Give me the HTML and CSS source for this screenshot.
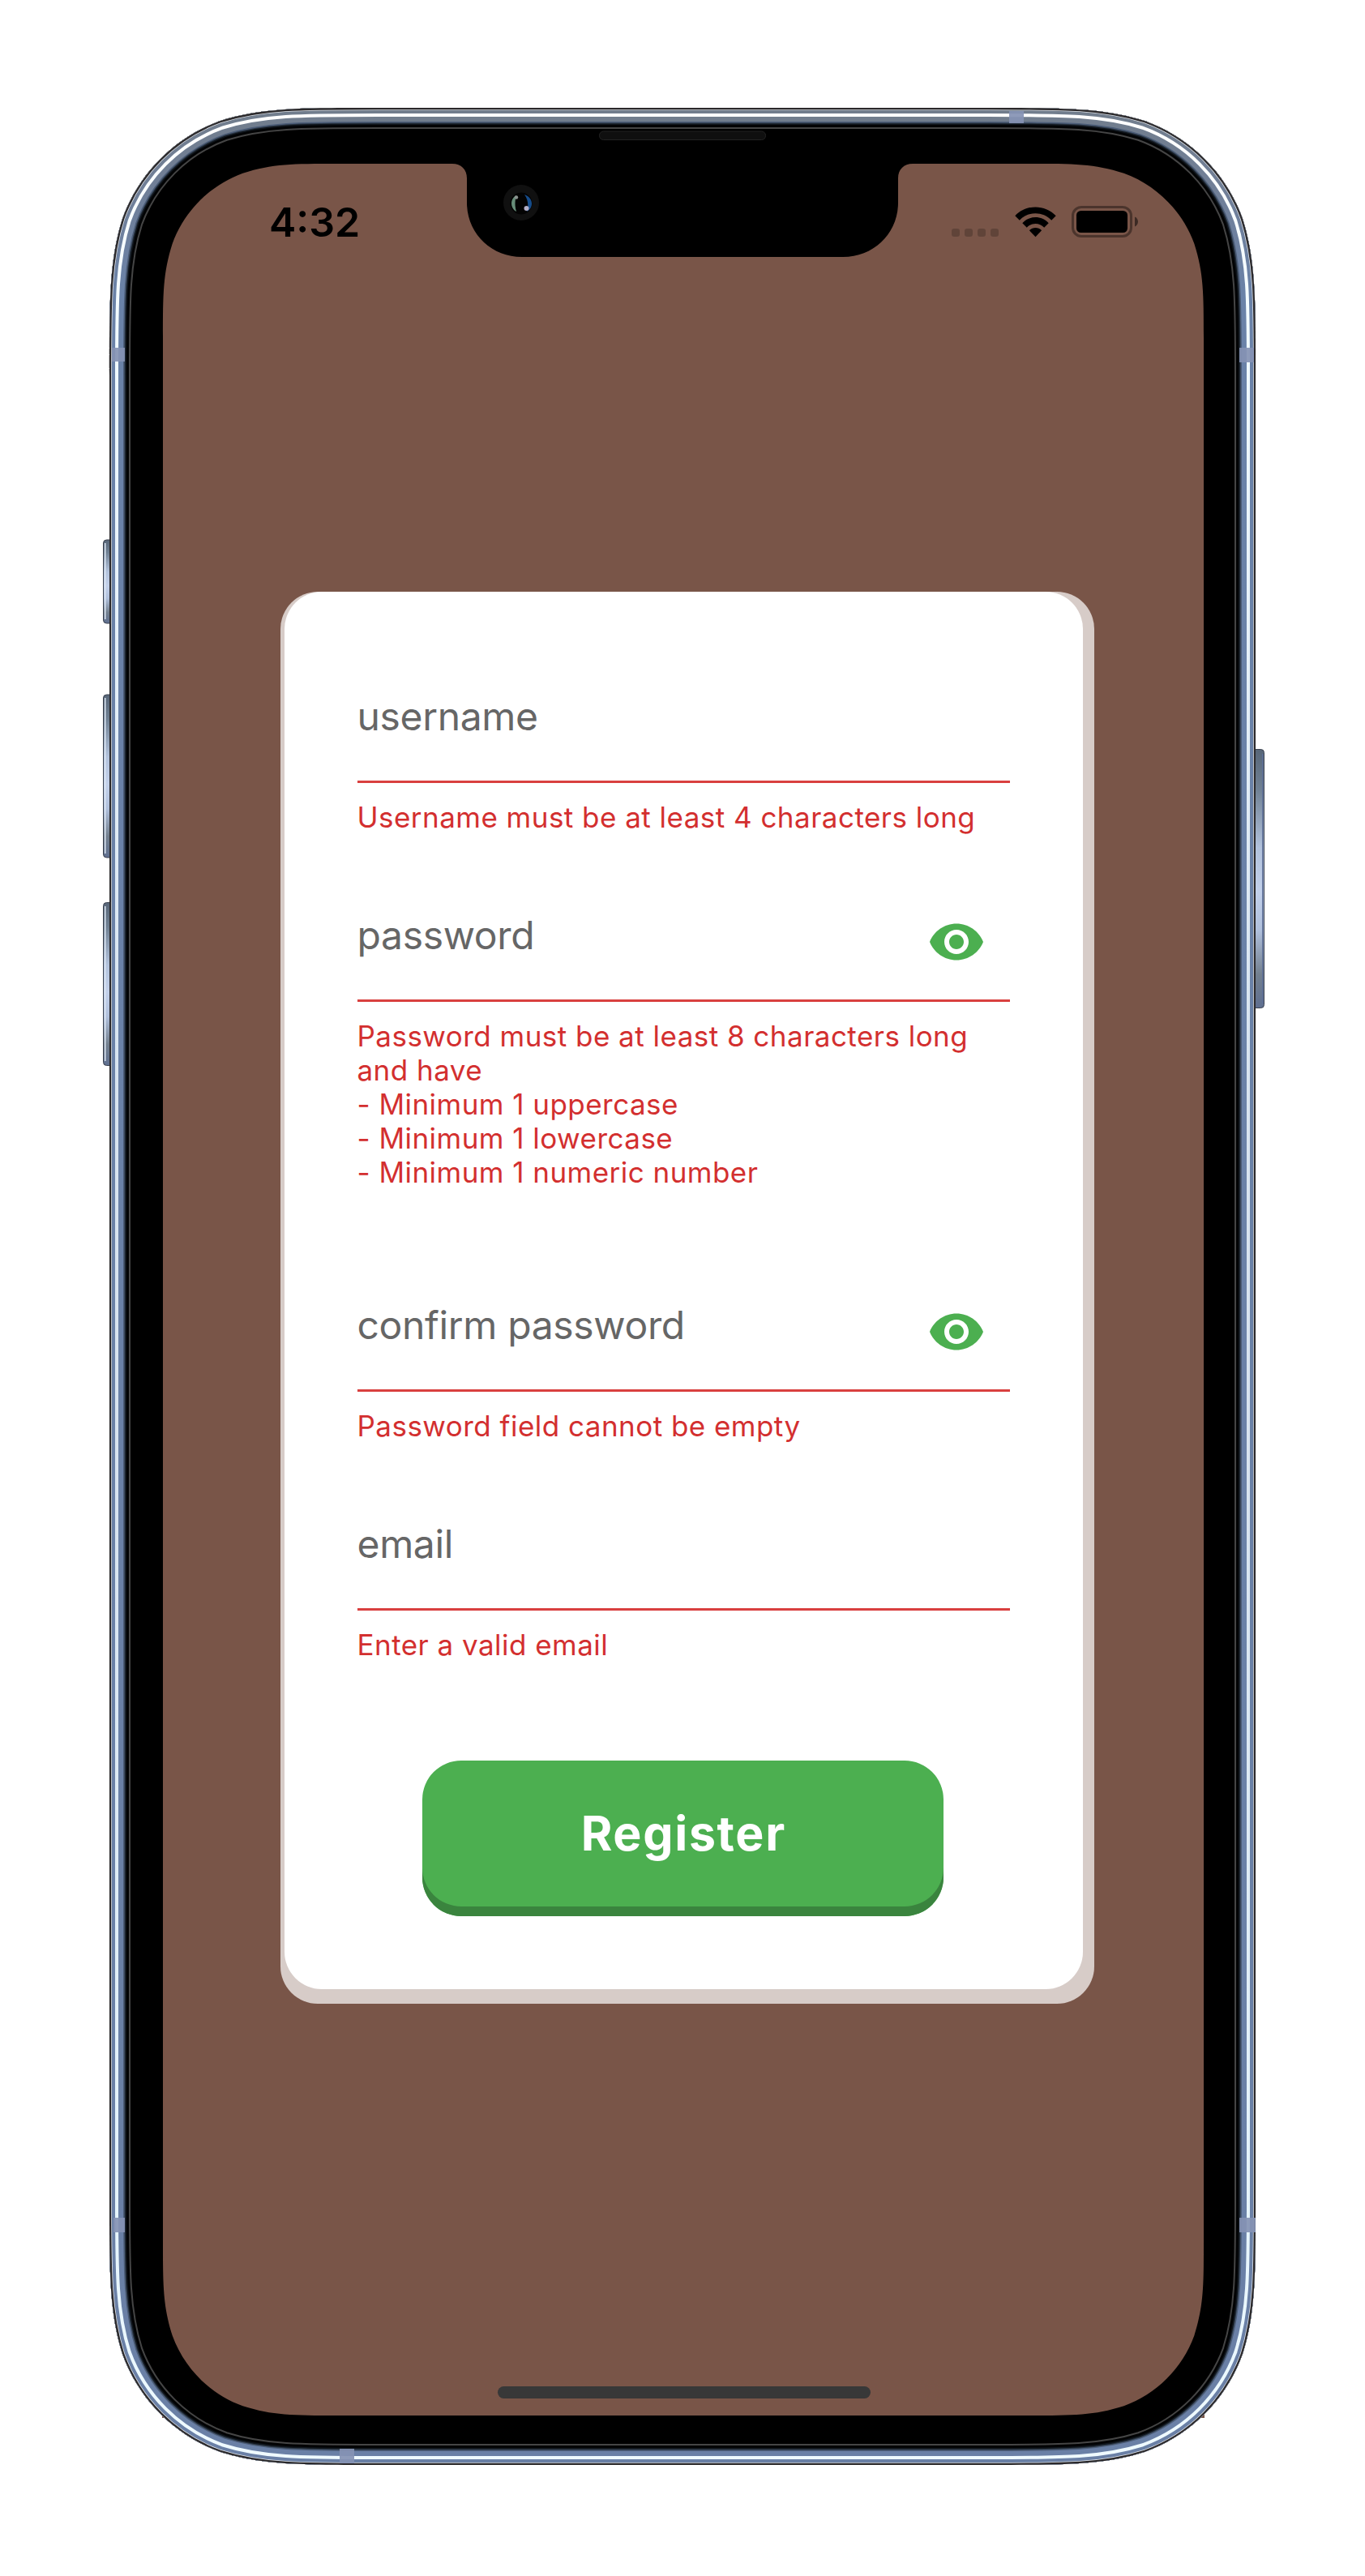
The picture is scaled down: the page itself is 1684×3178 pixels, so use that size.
FILE: index.html
```html
<!DOCTYPE html>
<html lang="en">
<head>
<meta charset="utf-8">
<title>Register</title>
<link rel="stylesheet" href="styles.css">
</head>
<body>
<div class="stage">
  <main class="screen">
    <header class="status">
      <span class="time">4:32</span>
      <span class="indicators">
        <span class="signal"><i></i><i></i><i></i><i></i></span>
        <svg class="wifi" viewBox="0 0 51 38" width="51" height="38">
          <path d="M0.3 11.2C14 -3.2 37 -3.2 50.7 11.2L45.2 16.7C34.500 5.400 16.500 5.400 5.800 16.700Z"/>
          <path d="M9.300 20.200C18.100 10.700 32.900 10.700 41.700 20.200L36.200 25.700C30.500 19.400 20.500 19.400 14.800 25.700Z"/>
          <path d="M17.900 29.300C22.100 25 28.900 25 33.100 29.300L25.500 37.200Z"/>
        </svg>
        <svg class="battery" viewBox="0 0 83 39" width="83" height="39">
          <rect x="1.500" y="1.500" width="72" height="36" rx="10.500" fill="none" stroke="#000" stroke-opacity=".38" stroke-width="3"/>
          <rect x="6" y="6" width="63" height="27" rx="5.500"/>
          <path d="M78 13.500C83.300 15.500 83.300 23.500 78 25.500Z" fill-opacity=".5"/>
        </svg>
      </span>
    </header>

    <form class="card">
      <div class="panel">
        <div class="field">
          <div class="input"><label>username</label></div>
          <p class="error">Username must be at least 4 characters long</p>
        </div>
        <div class="field field-password">
          <div class="input"><label>password</label>
            <svg class="eye" viewBox="0 0 24 24" width="72" height="72"><path d="M12 4.500C7 4.500 2.730 7.610 1 12c1.730 4.390 6 7.500 11 7.500s9.270-3.110 11-7.500c-1.730-4.390-6-7.500-11-7.500zM12 17c-2.760 0-5-2.240-5-5s2.240-5 5-5 5 2.240 5 5-2.240 5-5 5zm0-8c-1.660 0-3 1.340-3 3s1.340 3 3 3 3-1.340 3-3-1.340-3-3-3z"/></svg>
          </div>
          <p class="error">Password must be at least 8 characters long<br>and have<br>- Minimum 1 uppercase<br>- Minimum 1 lowercase<br>- Minimum 1 numeric number</p>
        </div>
        <div class="field">
          <div class="input"><label>confirm password</label>
            <svg class="eye" viewBox="0 0 24 24" width="72" height="72"><path d="M12 4.500C7 4.500 2.730 7.610 1 12c1.730 4.390 6 7.500 11 7.500s9.270-3.110 11-7.500c-1.730-4.390-6-7.500-11-7.500zM12 17c-2.760 0-5-2.240-5-5s2.240-5 5-5 5 2.240 5 5-2.240 5-5 5zm0-8c-1.660 0-3 1.340-3 3s1.340 3 3 3 3-1.340 3-3-1.340-3-3-3z"/></svg>
          </div>
          <p class="error">Password field cannot be empty</p>
        </div>
        <div class="field">
          <div class="input"><label>email</label></div>
          <p class="error">Enter a valid email</p>
        </div>
        <button class="register" type="button">Register</button>
      </div>
    </form>
    <div class="home"></div>
  </main>

  <svg class="bezel" viewBox="0 0 1684 3178" width="1684" height="3178">
    <defs>
      <path id="body" d="M465.2 133H1218.800C1313.900 133 1361.400 133 1412.600 149.200C1468.500 169.500 1512.500 213.500 1532.800 269.400C1549 320.600 1549 368.100 1549 463.200V2710.800C1549 2805.900 1549 2853.400 1532.800 2904.600C1512.500 2960.500 1468.500 3004.500 1412.600 3024.800C1361.400 3041 1313.900 3041 1218.800 3041H465.200C370.100 3041 322.600 3041 271.400 3024.800C215.500 3004.500 171.500 2960.500 151.200 2904.600C135 2853.400 135 2805.900 135 2710.800V463.200C135 368.100 135 320.600 151.200 269.400C171.500 213.500 215.500 169.500 271.400 149.200C322.600 133 370.100 133 465.200 133Z"/>
      <clipPath id="bodyClip"><use href="#body"/></clipPath>
      <linearGradient id="metal" gradientUnits="userSpaceOnUse" x1="0" y1="133" x2="0" y2="3041">
        <stop offset="0" stop-color="#717d8c"/><stop offset=".03" stop-color="#717f96"/><stop offset=".08" stop-color="#6a82a8"/><stop offset="1" stop-color="#6a80a6"/>
      </linearGradient>
      <linearGradient id="shine" gradientUnits="userSpaceOnUse" x1="0" y1="133" x2="0" y2="3041">
        <stop offset="0" stop-color="#fff"/><stop offset=".1" stop-color="#f0faff"/><stop offset=".4" stop-color="#d8e4f0"/><stop offset=".6" stop-color="#d8e4f0"/><stop offset=".9" stop-color="#e6f5fc"/><stop offset="1" stop-color="#effaff"/>
      </linearGradient>
      <linearGradient id="key" x1="0" y1="0" x2="0" y2="1">
        <stop offset="0" stop-color="#586678"/><stop offset=".15" stop-color="#6f8093"/><stop offset=".38" stop-color="#b2c2dc"/><stop offset=".55" stop-color="#c2d0ea"/><stop offset=".7" stop-color="#b0c0dc"/><stop offset=".87" stop-color="#73808f"/><stop offset="1" stop-color="#5f6f90"/>
      </linearGradient>
    </defs>

    <!-- side keys -->
    <g fill="url(#key)" stroke="#3c4350" stroke-width="1">
      <rect x="127.500" y="666" width="14" height="103" rx="4"/>
      <rect x="127.500" y="857" width="14" height="201" rx="4"/>
      <rect x="127.500" y="1113.500" width="14" height="201" rx="4"/>
      <rect x="1542" y="924.500" width="17.500" height="319" rx="4"/>
    </g>
    <g fill="#dbe5f2">
      <rect x="129" y="670" width="1.500" height="94"/>
      <rect x="129" y="861" width="1.500" height="192"/>
      <rect x="129" y="1118" width="1.500" height="191"/>
    </g>
    <rect x="1557" y="930" width="1.500" height="308" fill="#5d6e96"/>

    <!-- black glass with the display cut out around the notch -->
    <path fill="#000" fill-rule="evenodd" d="M465.2 133H1218.800C1313.900 133 1361.400 133 1412.600 149.200C1468.500 169.500 1512.500 213.500 1532.800 269.400C1549 320.600 1549 368.100 1549 463.200V2710.800C1549 2805.900 1549 2853.400 1532.800 2904.600C1512.500 2960.500 1468.500 3004.500 1412.600 3024.800C1361.400 3041 1313.900 3041 1218.800 3041H465.200C370.100 3041 322.600 3041 271.400 3024.800C215.500 3004.500 171.500 2960.500 151.200 2904.600C135 2853.400 135 2805.900 135 2710.800V463.200C135 368.100 135 320.600 151.200 269.400C171.500 213.500 215.500 169.500 271.400 149.200C322.600 133 370.100 133 465.200 133Z
      M416 202H558C569 202 576 209 576 220V250C576 288 606 317 644 317H1040C1078 317 1108 288 1108 250V220C1108 209 1115 202 1126 202H1270C1325 202 1349.500 202 1386.500 213.700C1426.800 228.400 1458.600 260.200 1473.300 300.500C1485 337.500 1485 362 1485 417V2765C1485 2820 1485 2844.500 1473.300 2881.500C1458.600 2921.800 1426.800 2953.600 1386.500 2968.300C1349.500 2980 1325 2980 1270 2980H416C361 2980 336.500 2980 299.500 2968.300C259.200 2953.600 227.400 2921.800 212.700 2881.500C201 2844.500 201 2820 201 2765V417C201 362 201 337.500 212.700 300.500C227.400 260.200 259.200 228.400 299.500 213.700C336.500 202 361 202 416 202Z"/>

    <!-- metal band, widest ring first -->
    <g clip-path="url(#bodyClip)" fill="none">
      <use href="#body" stroke="#454545" stroke-width="52"/>
      <use href="#body" stroke="#020304" stroke-width="48"/>
      <use href="#body" stroke="#10161d" stroke-width="42"/>
      <use href="#body" stroke="#2c3846" stroke-width="39"/>
      <use href="#body" stroke="#4c5d78" stroke-width="37"/>
      <use href="#body" stroke="url(#metal)" stroke-width="34"/>
      <use href="#body" stroke="url(#shine)" stroke-width="22"/>
      <use href="#body" stroke="url(#metal)" stroke-width="14"/>
      <use href="#body" stroke="#dfe3e8" stroke-width="6"/>
      <use href="#body" stroke="#2b292b" stroke-width="4.400"/>
    </g>

    <!-- antenna bands -->
    <g fill="#8592b4" fill-opacity=".92">
      <rect x="138" y="429" width="16" height="17"/>
      <rect x="1529" y="429" width="18" height="18"/>
      <rect x="140" y="2736" width="14" height="18"/>
      <rect x="1529" y="2736" width="20" height="18"/>
      <rect x="1245" y="137" width="18" height="15"/>
      <rect x="419" y="3021" width="18" height="18"/>
    </g>

    <!-- speaker and camera -->
    <rect x="739.500" y="162" width="205" height="10.500" rx="5" fill="#0f0f0f" stroke="#222"/>
    <circle cx="643" cy="250" r="22" fill="#101010"/>
    <circle cx="643" cy="251" r="13.500" fill="#030303"/>
    <path d="M637 241C629 245 629 257 637 261C635 254 635 248 637 241Z" fill="#668c78"/>
    <path d="M647 240C658 244 659 256 650 261C652 254 652 247 647 240Z" fill="#164c8a"/>
    <circle cx="637" cy="243.500" r="2.200" fill="#8b928f"/>
    <circle cx="649.500" cy="257" r="3" fill="#b5b0c8"/>
  </svg>
</div>
</body>
</html>
```
FILE: styles.css
```css
* {
  box-sizing: border-box;
}

body {
  margin: 0;
  background: #fff;
  font-family: Inter, "Liberation Sans", sans-serif;
}

.stage {
  position: relative;
  width: 1684px;
  height: 3178px;
  padding: 202px 198px 0 200px;
}

.bezel {
  position: absolute;
  inset: 0;
}

.screen {
  display: flex;
  flex-direction: column;
  height: 2781px;
  background: #795548;
}

.status {
  display: flex;
  justify-content: space-between;
  height: 527.5px;
  padding: 42px 81px 0 132px;
}

.time {
  font-size: 50px;
  font-weight: 600;
  line-height: 60px;
  color: #000;
}

.indicators {
  display: flex;
  height: 60px;
  padding-top: 10px;
}

.signal {
  display: flex;
  gap: 6px;
  padding-top: 28px;
}

.signal i {
  width: 10px;
  height: 10px;
  border-radius: 3px;
  background: rgba(0, 0, 0, 0.2);
}

.wifi {
  margin: 1px 0 0 20px;
}

.battery {
  margin-left: 19px;
}

.card {
  width: 1004px;
  margin-left: 145.500px;
  padding: 0.5px 13.5px 17.5px 5px;
  border-radius: 46px;
  background: #d7ccc8;
}

.panel {
  display: flex;
  flex-direction: column;
  height: 1724px;
  padding: 91.500px 90px 90px;
  border-radius: 46px;
  background: #fff;
}

.field {
  height: 270px;
}

.field-password {
  height: 481px;
}

.input {
  display: flex;
  justify-content: space-between;
  height: 144px;
  padding: 33px 30px 0 0;
  border-bottom: 3px solid #d9403f;
}

.input label {
  font-size: 48px;
  line-height: 58px;
  letter-spacing: -0.33px;
  color: #666;
}

.eye {
  margin-top: 1px;
  fill: #4caf50;
}

.error {
  margin: 21.500px 0 0;
  font-size: 35px;
  line-height: 42px;
  letter-spacing: 0.47px;
  white-space: nowrap;
  color: #d32f2f;
}

.register {
  width: 643px;
  height: 192px;
  margin: 59.500px 0 0 80.500px;
  padding: 0 0 12px 1.6px;
  border: 0;
  border-radius: 48px;
  background: #4caf50;
  box-shadow: inset 0 -12px 0 #3a843e;
  font: 700 59px/70px Inter, "Liberation Sans", sans-serif;
  letter-spacing: 1.7px;
  color: #fff;
}

.home {
  width: 460px;
  height: 15px;
  margin: auto 0 24px 413.500px;
  border-radius: 8px;
  background: #383838;
}
```
